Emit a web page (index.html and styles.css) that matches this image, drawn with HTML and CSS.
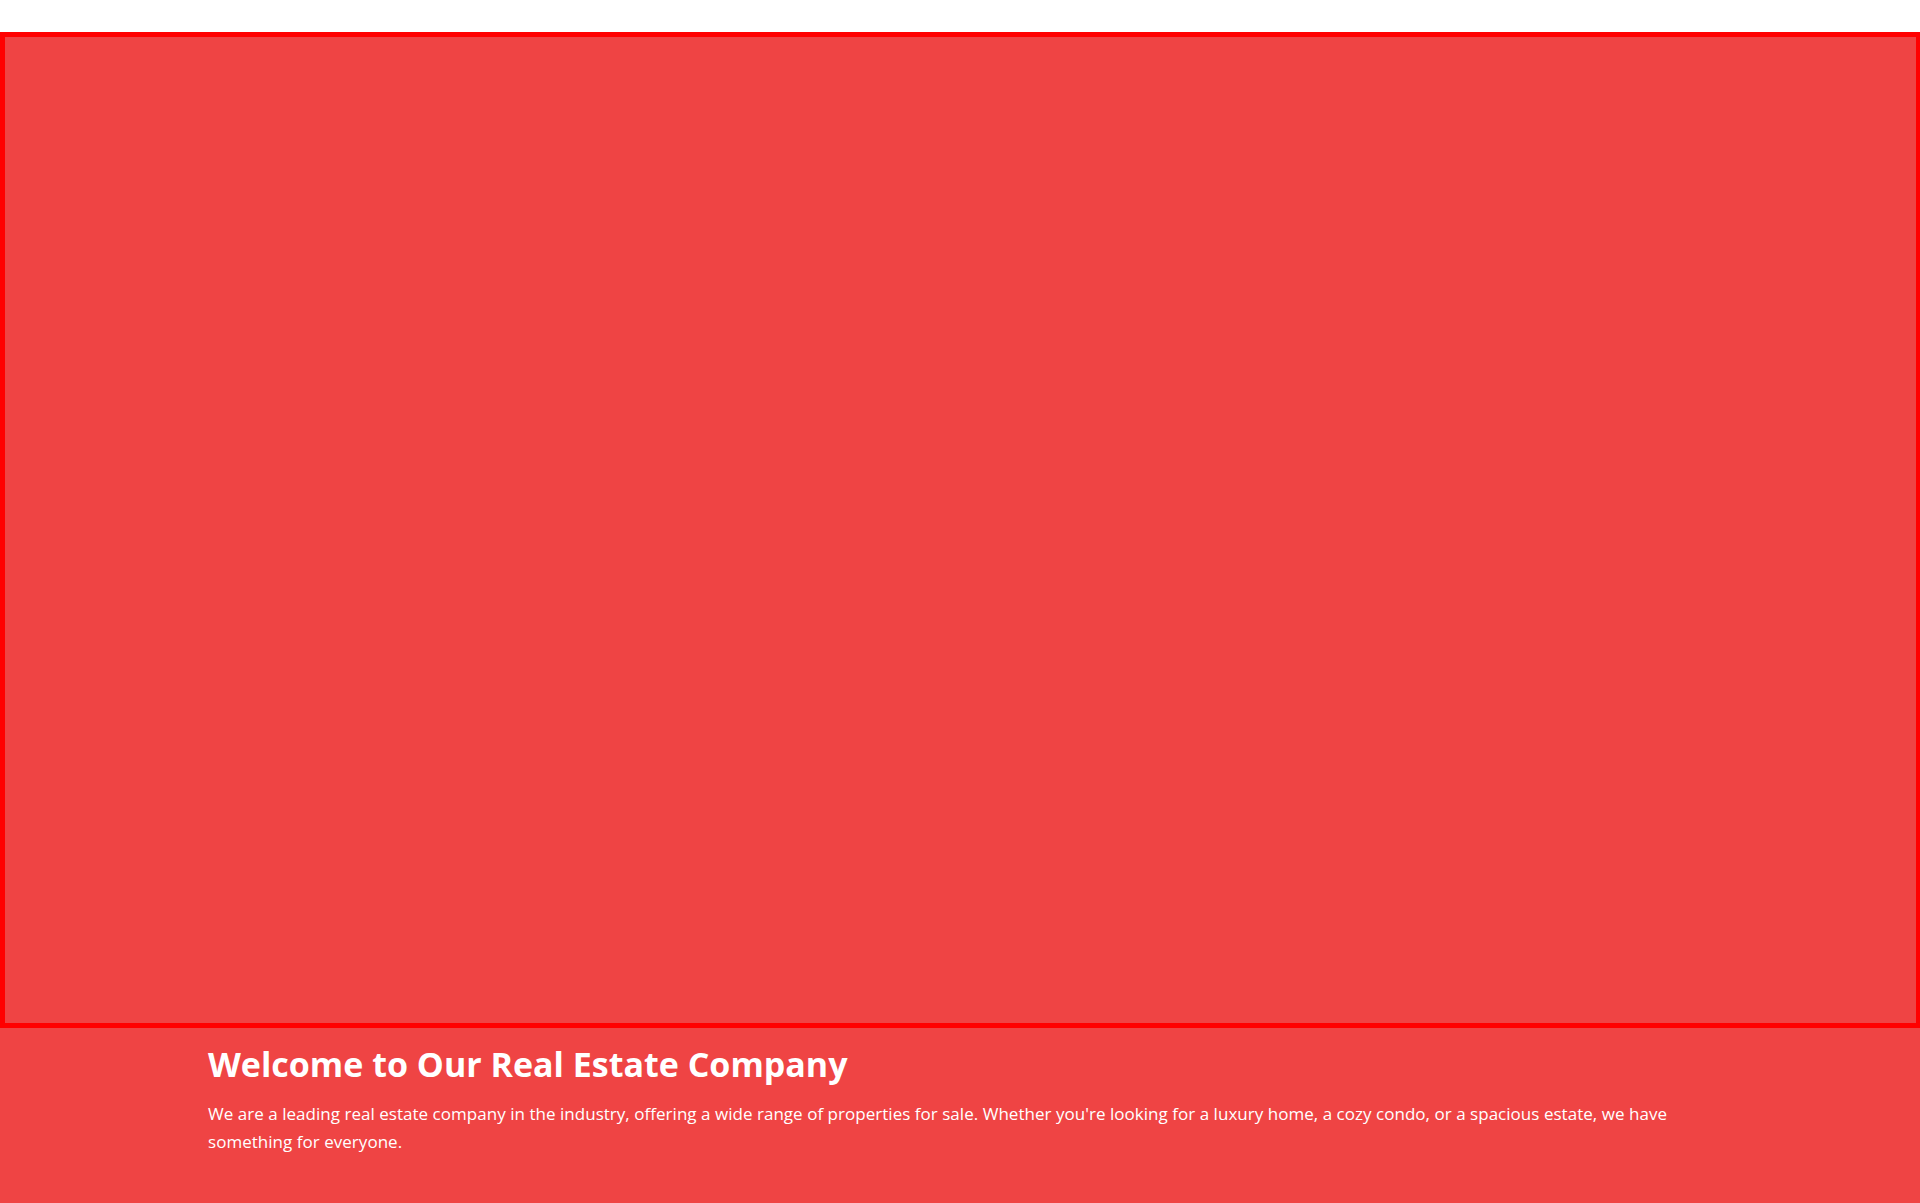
FILE: index.html
```html
<!DOCTYPE html>
<html lang="en">
<head>
<meta charset="utf-8">
<title>Real Estate Company</title>
<link rel="stylesheet" href="styles.css">
</head>
<body>
<div class="topbar"></div>
<main class="hero">
  <div class="frame"></div>
  <div class="container">
    <h1 class="title">Welcome to Our Real Estate Company</h1>
    <p class="lead">We are a leading real estate company in the industry, offering a wide range of properties for sale. Whether you're looking for a luxury home, a cozy condo, or a spacious estate, we have something for everyone.</p>
  </div>
</main>
</body>
</html>
```
FILE: styles.css
```css
html, body {
  margin: 0;
  padding: 0;
}
body {
  background: #ffffff;
  font-family: "Open Sans", "Noto Sans", sans-serif;
  color: #ffffff;
  overflow: hidden;
}
.topbar {
  height: 32px;
  background: #ffffff;
}
.hero {
  background: #ef4444;
  min-height: 1171px;
}
.frame {
  box-sizing: border-box;
  height: 996px;
  border: 5px solid #ff0000;
  border-right-width: 4px;
}
.container {
  max-width: 1536px;
  margin: 0 auto;
  padding: 16px 16px 0;
  box-sizing: border-box;
}
.title {
  margin: 0 0 16px;
  font-size: 34px;
  line-height: 40px;
  font-weight: 700;
}
.lead {
  margin: 0;
  font-size: 17px;
  line-height: 28px;
  letter-spacing: 0.03px;
}
```
